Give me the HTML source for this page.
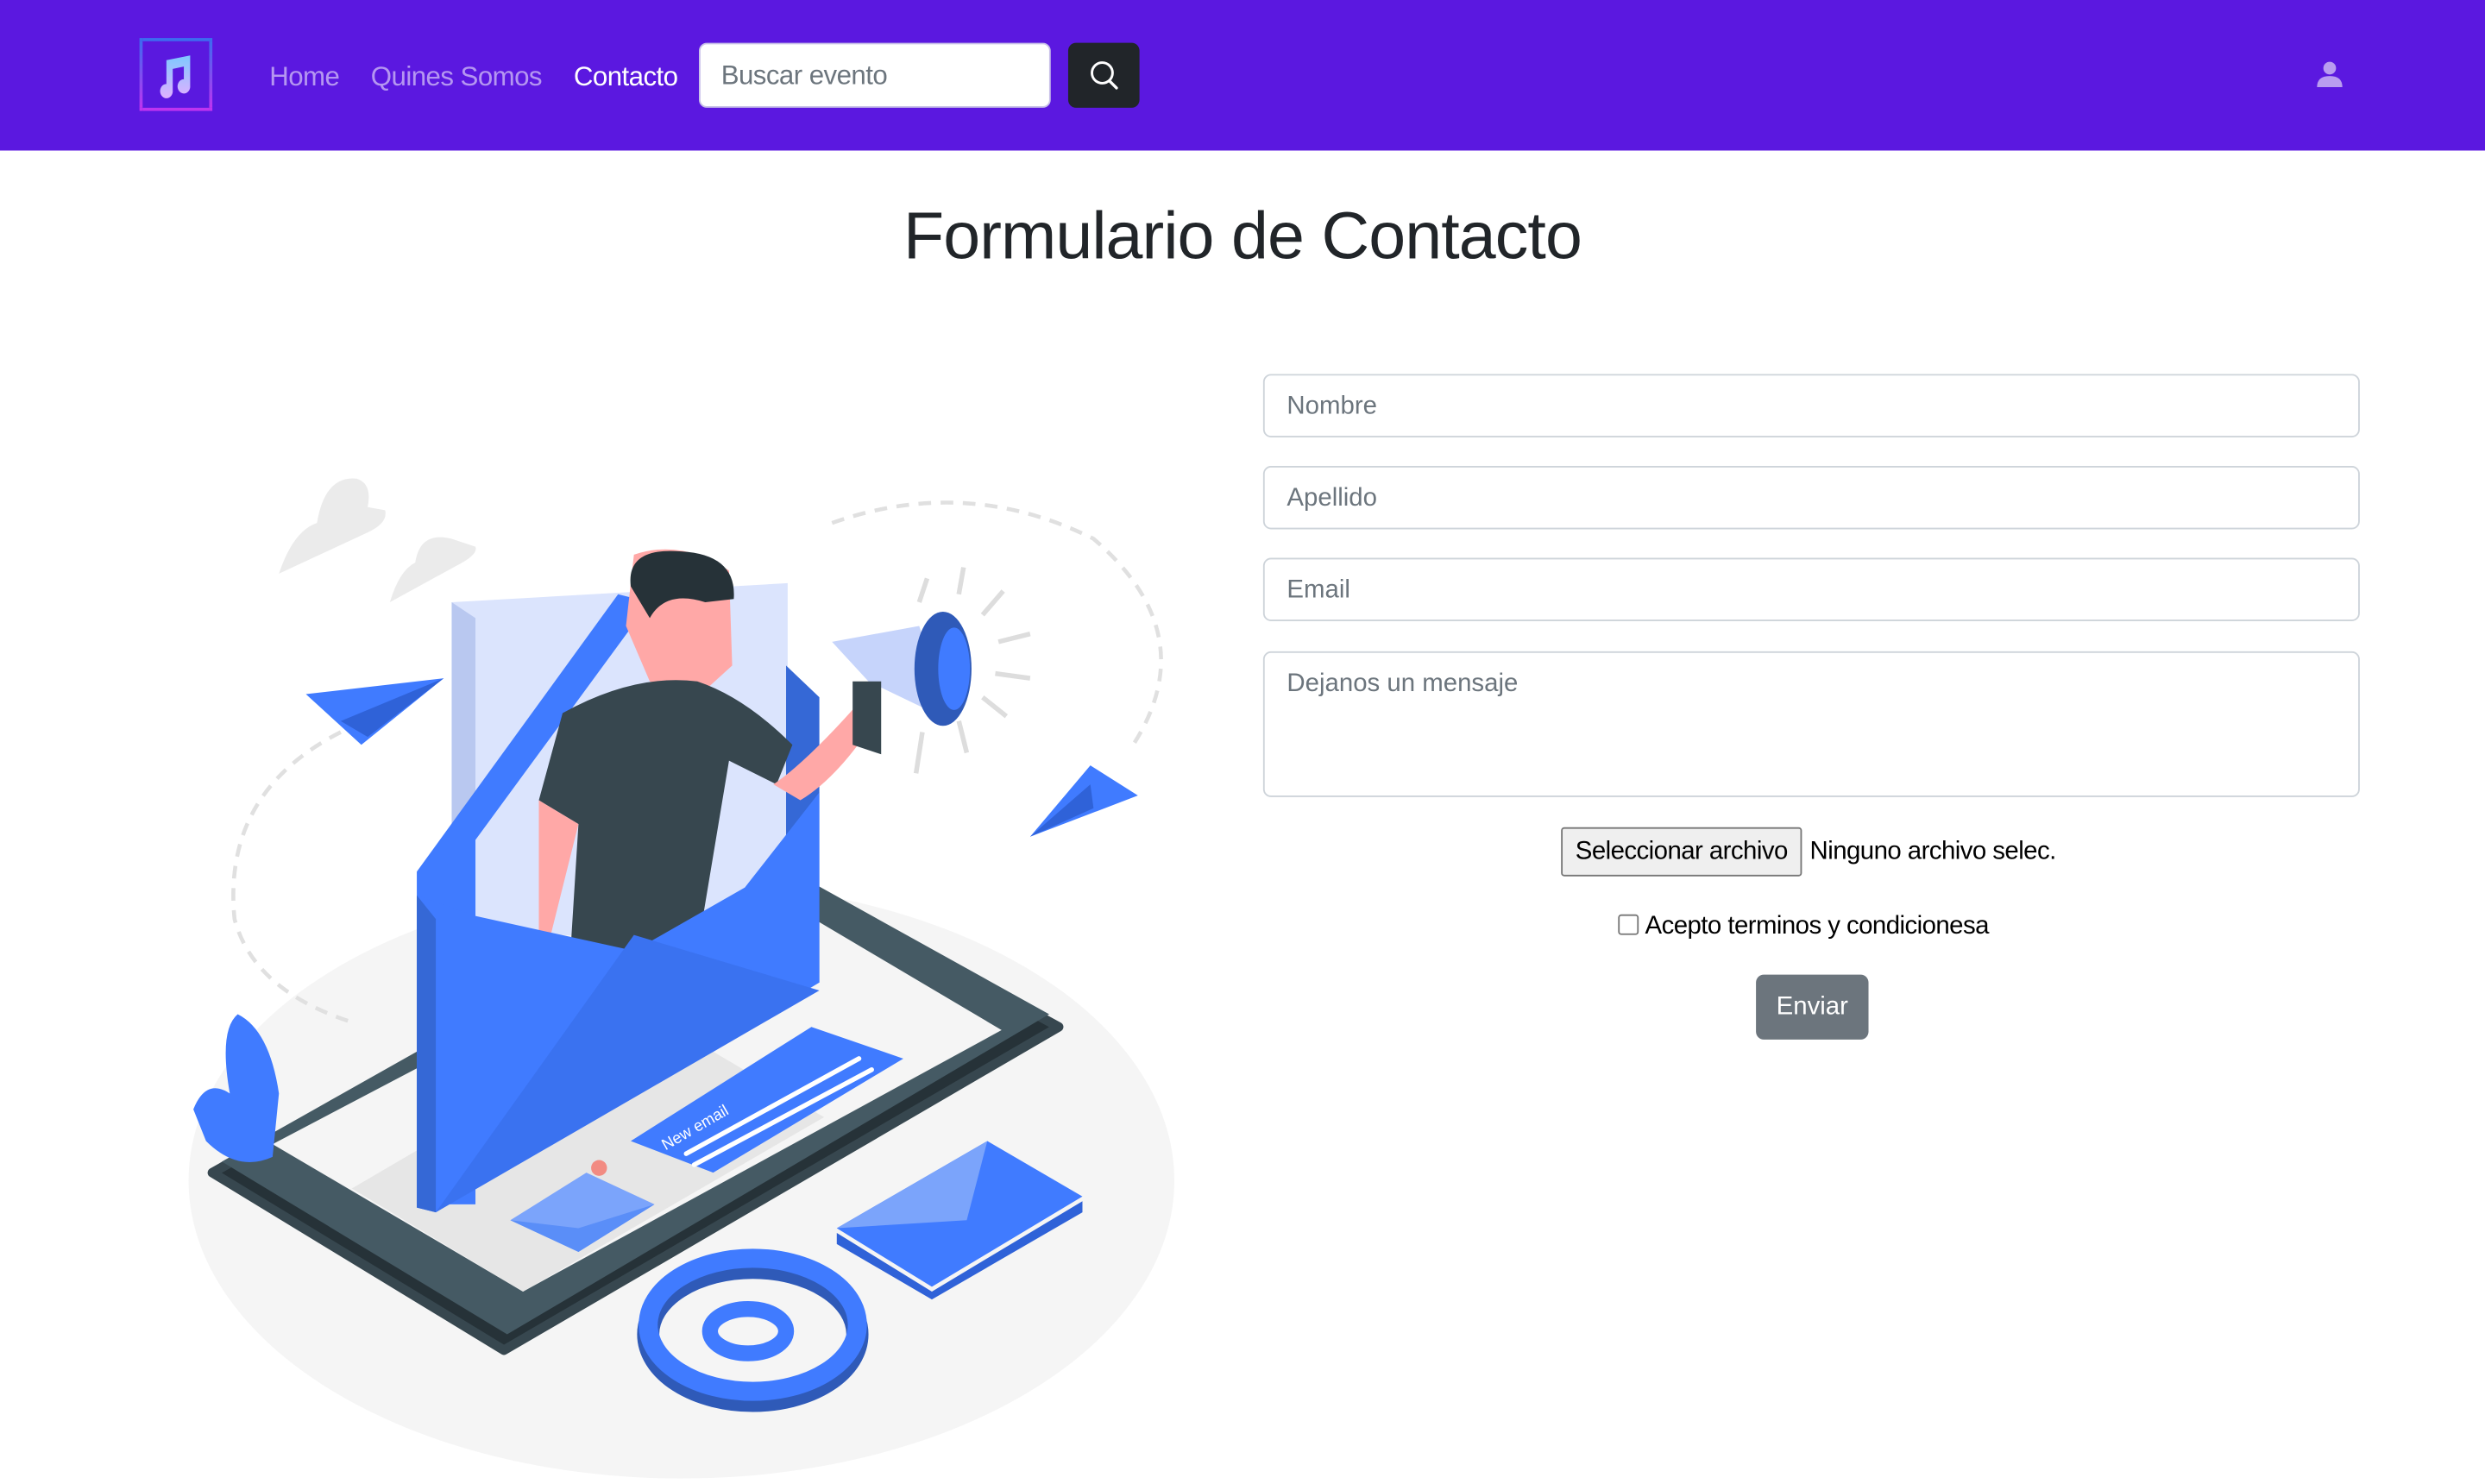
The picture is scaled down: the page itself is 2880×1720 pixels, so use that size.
<!DOCTYPE html>
<html><head><meta charset="utf-8">
<style>
html,body{margin:0;padding:0;width:2880px;height:1720px;overflow:hidden;background:#fff}
#w{position:absolute;left:0;top:0;width:1568px;height:936px;transform:scale(1.836735);transform-origin:0 0;font-family:"Liberation Sans",sans-serif}
.nav{position:absolute;left:0;top:0;width:1568px;height:95px;background:#5b18e0}
.logo{position:absolute;left:88px;top:24px;width:42px;height:42px;border:2px solid;border-image:linear-gradient(#3b6cf0,#c033f0) 1;border-radius:4px;background:#5a19df}
.nl{position:absolute;top:39px;font-size:17px;color:rgba(255,255,255,.55);letter-spacing:-0.3px}
.inp{position:absolute;left:441px;top:27px;width:222px;height:41px;background:#fff;border:1px solid #c8c0e8;border-radius:5px;box-sizing:border-box;font-size:17px;color:#6c757d;padding:10px 13px;letter-spacing:-0.3px}
.sb{position:absolute;left:674px;top:27px;width:45px;height:41px;background:#212529;border-radius:5px}
h1{position:absolute;left:0;width:1568px;top:125px;margin:0;text-align:center;font-weight:400;font-size:42px;color:#212529;letter-spacing:-0.5px}
.f{position:absolute;left:797px;width:692px;border:1px solid #ced4da;border-radius:5px;box-sizing:border-box;font-size:16px;color:#6c757d;padding:11px 14px}
</style></head><body><div id="w">
<div class="nav">
<div class="logo"><svg width="42" height="42" viewBox="0 0 42 42"><defs><linearGradient id="g" x1="0" y1="0" x2="0" y2="1"><stop offset="0" stop-color="#7ec8ff"/><stop offset="1" stop-color="#e0b0ff"/></linearGradient></defs><path d="M15 12 L30 9 L30 28 A4 4.5 0 1 1 26 24 L26 16 L19 17.5 L19 31 A4 4.5 0 1 1 15 27 Z" fill="url(#g)"/></svg></div>
<div class="nl" style="left:170px">Home</div>
<div class="nl" style="left:234px">Quines Somos</div>
<div class="nl" style="left:362px;color:#fff">Contacto</div>
<div class="inp">Buscar evento</div>
<div class="sb"><svg width="45" height="41" viewBox="0 0 45 41"><circle cx="21.5" cy="19" r="6.5" fill="none" stroke="#fff" stroke-width="1.6"/><line x1="26" y1="24" x2="30.5" y2="28.5" stroke="#fff" stroke-width="1.8" stroke-linecap="round"/></svg></div>
<svg style="position:absolute;left:1460px;top:37px" width="20" height="20" viewBox="0 0 20 20"><circle cx="10" cy="6" r="4" fill="#b99cf0"/><path d="M2 18 Q2 11 10 11 Q18 11 18 18 Z" fill="#b99cf0"/></svg>
</div>
<h1>Formulario de Contacto</h1>

<div class="f" style="top:236px;height:40px">Nombre</div>
<div class="f" style="top:294px;height:40px">Apellido</div>
<div class="f" style="top:352px;height:40px">Email</div>
<div class="f" style="top:411px;height:92px">Dejanos un mensaje</div>
<div style="position:absolute;left:985px;top:522px;width:152px;height:31px;box-sizing:border-box;background:#efefef;border:1px solid #767676;border-radius:2px;font-size:16px;color:#000;text-align:center;line-height:29px;letter-spacing:-0.3px">Seleccionar archivo</div>
<div style="position:absolute;left:1142px;top:529px;font-size:16px;color:#000;letter-spacing:-0.3px">Ninguno archivo selec.</div>
<div style="position:absolute;left:1021px;top:577px;width:11px;height:11px;border:1px solid #767676;border-radius:2px"></div>
<div style="position:absolute;left:1038px;top:576px;font-size:16px;color:#000;letter-spacing:-0.3px">Acepto terminos y condicionesa</div>
<div style="position:absolute;left:1108px;top:615px;width:71px;height:41px;background:#6c757d;border-radius:5px;color:#fff;font-size:16px;text-align:center;line-height:42px">Enviar</div>

<svg style="position:absolute;left:0;top:0" width="1568" height="936" viewBox="0 0 1568 936">
<ellipse cx="430" cy="745" rx="311" ry="188" fill="#f5f5f5"/>
<path d="M525 330 Q610 300 690 340 Q760 400 715 470" fill="none" stroke="#e0e0e0" stroke-width="2.5" stroke-dasharray="8 6"/>
<path d="M215 462 Q140 500 148 580 Q160 625 222 645" fill="none" stroke="#e0e0e0" stroke-width="2.5" stroke-dasharray="8 6"/>
<path d="M176 362 Q185 335 200 330 Q205 300 225 302 Q235 305 232 320 L243 322 Q245 330 232 336 Z" fill="#ebebeb"/>
<path d="M246 380 Q252 360 262 355 Q265 335 285 340 L300 345 Q302 350 288 357 Z" fill="#ebebeb"/>
<path d="M193 438 L280 428 L228 470 Z" fill="#407bff"/><path d="M215 455 L280 428 L232 465 Z" fill="#2f62d8"/>
<path d="M650 528 L688 483 L718 502 Z" fill="#407bff"/><path d="M650 528 L688 495 L690 510 Z" fill="#2f62d8"/>
<path d="M134 740 L480 545 L668 648 L318 852 Z" fill="#263238" stroke="#37474f" stroke-width="6" stroke-linejoin="round"/>
<path d="M140 733 L482 540 L662 640 L320 842 Z" fill="#455a64"/>
<path d="M172 722 L480 560 L632 650 L330 815 Z" fill="#f5f5f5"/>
<path d="M222 750 L330 815 L520 705 L410 640 Z" fill="#e6e6e6"/>
<path d="M285 380 L497 368 L497 600 L285 585 Z" fill="#dbe4fd"/>
<path d="M285 380 L285 585 L300 590 L300 390 Z" fill="#b9c8f0"/>
<path d="M263 550 L390 375 L410 380 L300 530 L300 760 L263 760 Z" fill="#407bff"/>
<path d="M496 420 L517 440 L517 620 L496 620 Z" fill="#3568d6"/>
<path d="M400 350 Q430 340 460 360 L462 420 L440 440 L410 430 L395 395 Z" fill="#ffa8a7"/>
<path d="M398 370 Q395 345 430 348 Q465 350 463 378 L445 380 Q420 372 410 390 Z" fill="#263238"/>
<path d="M355 450 Q400 425 440 430 Q470 440 500 470 L490 495 L460 480 L440 600 L360 600 L365 520 L340 505 Z" fill="#37474f"/>
<path d="M340 505 L365 520 L345 600 L330 620 L340 600 Z" fill="#ffa8a7"/>
<path d="M488 495 Q510 480 545 440 L555 450 Q530 490 505 505 Z" fill="#ffa8a7"/>
<path d="M525 405 L580 395 L600 455 L548 430 Z" fill="#c6d4fb"/>
<ellipse cx="595" cy="422" rx="18" ry="36" fill="#2f5ab8"/><ellipse cx="602" cy="422" rx="10" ry="26" fill="#407bff"/>
<path d="M538 430 L556 430 L556 476 L538 470 Z" fill="#37474f"/>
<g stroke="#ddd" stroke-width="3"><line x1="580" y1="380" x2="585" y2="365"/><line x1="605" y1="375" x2="608" y2="358"/><line x1="620" y1="388" x2="633" y2="373"/><line x1="630" y1="405" x2="650" y2="400"/><line x1="628" y1="425" x2="650" y2="428"/><line x1="620" y1="440" x2="635" y2="452"/><line x1="605" y1="455" x2="610" y2="475"/><line x1="582" y1="462" x2="578" y2="488"/></g>
<path d="M263 565 L263 762 L275 765 L517 620 L517 500 L470 560 L400 600 L300 578 Z" fill="#407bff"/>
<path d="M275 765 L400 590 L517 625 Z" fill="#3a72f0"/>
<path d="M263 565 L263 762 L275 765 L275 580 Z" fill="#3568d6"/>
<path d="M398 720 L512 648 L570 668 L450 740 Z" fill="#407bff"/>
<text x="0" y="0" transform="translate(420,726) rotate(-30)" font-size="10" fill="#fff" font-family="Liberation Sans">New email</text>
<line x1="433" y1="728" x2="542" y2="668" stroke="#fff" stroke-width="3" stroke-linecap="round"/>
<line x1="438" y1="735" x2="550" y2="675" stroke="#fff" stroke-width="3" stroke-linecap="round"/>
<path d="M322 770 L370 740 L413 760 L365 790 Z" fill="#7ba4fb"/><path d="M322 770 L365 775 L413 760 L365 790 Z" fill="#5a8ef8"/>
<circle cx="378" cy="737" r="5" fill="#f28b82"/>
<path d="M528 775 L623 720 L683 755 L588 812 Z" fill="#407bff"/><path d="M528 775 L623 720 L610 770 Z" fill="#7ba4fb"/><path d="M528 778 L588 815 L683 758 L683 765 L588 820 L528 785 Z" fill="#2f62d8"/>
<ellipse cx="475" cy="842" rx="66" ry="42" fill="none" stroke="#2f5ab8" stroke-width="14"/>
<ellipse cx="475" cy="836" rx="66" ry="42" fill="none" stroke="#407bff" stroke-width="12"/>
<ellipse cx="472" cy="840" rx="24" ry="14" fill="none" stroke="#407bff" stroke-width="10"/>
<path d="M122 700 Q130 680 145 690 Q138 650 150 640 Q170 650 176 690 L172 730 Q150 740 130 720 Z" fill="#407bff"/>
</svg>
</div></body></html>
